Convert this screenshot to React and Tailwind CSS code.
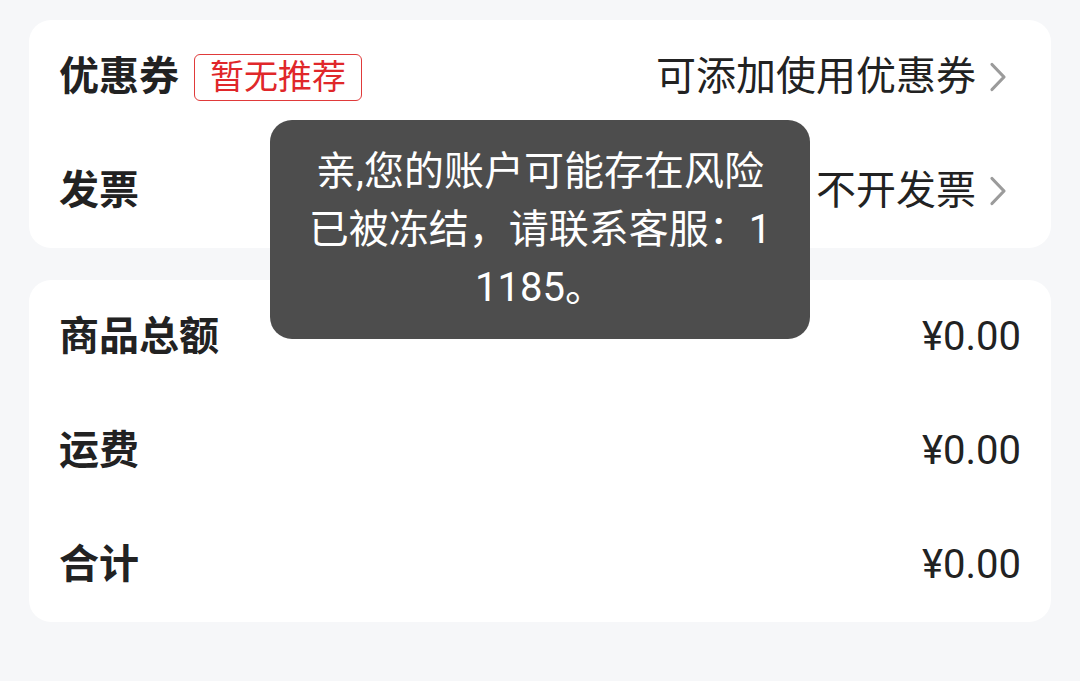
import React from "react";

const font = { fontFamily: '"Roboto", "Noto Sans CJK SC", sans-serif' };

function Chevron() {
  return (
    <svg width="22" height="32" viewBox="0 0 22 32" className="ml-[11px] mr-[12px]" fill="none">
      <path d="M5 3.5 L17 16 L5 28.5" stroke="#9b9b9b" strokeWidth="3.2" strokeLinecap="round" strokeLinejoin="round" />
    </svg>
  );
}

function Row({ label, children }) {
  return (
    <div className="flex h-[114px] items-center justify-between">
      <div className="flex items-center">{label}</div>
      <div className="flex items-center">{children}</div>
    </div>
  );
}

export default function App() {
  return (
    <div
      className="relative h-[681px] w-[1080px] overflow-hidden bg-[#f6f7f9] px-[29px] pt-[20px] text-[40px] text-[#222222]"
      style={font}
    >
      <div className="rounded-[22px] bg-white px-[30px]">
        <Row
          label={
            <>
              <span className="font-bold">优惠券</span>
              <span className="ml-[15px] flex h-[47px] items-center rounded-[6px] border-[1.5px] border-[#e03a3a] px-[15px] text-[34px] text-[#e0272a]">
                暂无推荐
              </span>
            </>
          }
        >
          <span>可添加使用优惠券</span>
          <Chevron />
        </Row>
        <Row label={<span className="font-bold">发票</span>}>
          <span>不开发票</span>
          <Chevron />
        </Row>
      </div>

      <div className="mt-[32px] rounded-[22px] bg-white px-[30px]">
        <Row label={<span className="font-bold">商品总额</span>}>
          <span>¥0.00</span>
        </Row>
        <Row label={<span className="font-bold">运费</span>}>
          <span>¥0.00</span>
        </Row>
        <Row label={<span className="font-bold">合计</span>}>
          <span>¥0.00</span>
        </Row>
      </div>

      <div className="absolute left-[270px] top-[120px] w-[540px] rounded-[22px] bg-[#4d4d4d] px-[36px] pb-[22px] pt-[23px] text-center text-[40px] leading-[58px] text-white [word-break:break-all]">
        亲,您的账户可能存在风险已被冻结，请联系客服：11185。
      </div>
    </div>
  );
}
